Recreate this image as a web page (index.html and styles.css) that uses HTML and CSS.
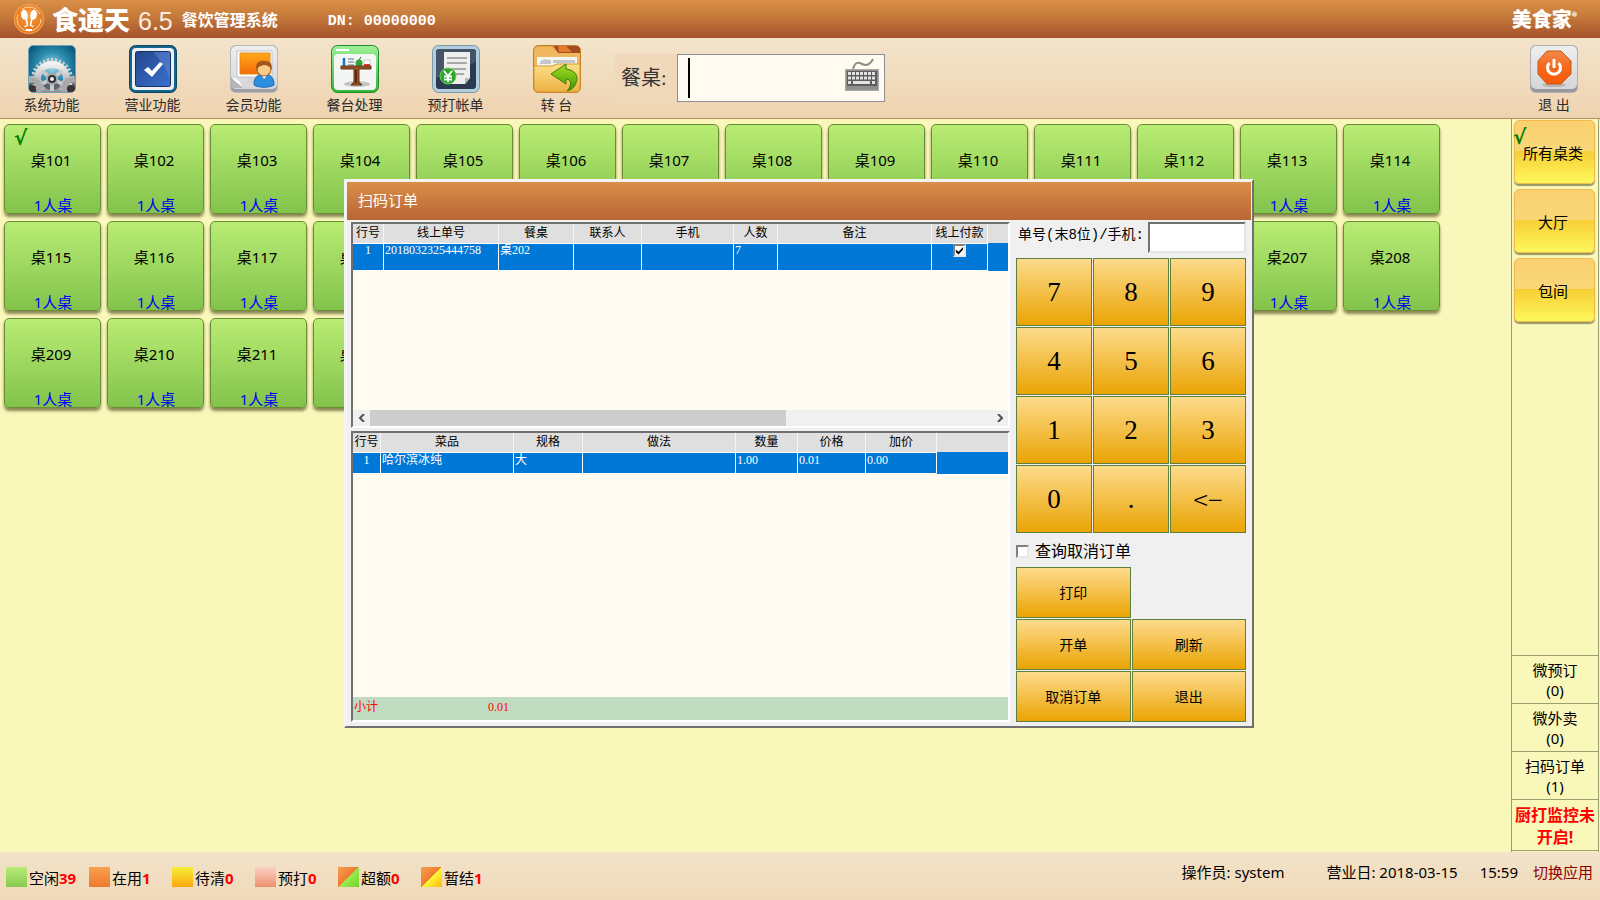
FILE: index.html
```
<!DOCTYPE html>
<html lang="zh-CN">
<head>
    <meta charset="UTF-8">
    <meta name="viewport" content="width=device-width, initial-scale=1.0">
    <title>食通天 6.5 餐饮管理系统</title>
    <link rel="stylesheet" href="styles.css">
</head>
<body>
    <header class="titlebar">
        <svg class="logo" viewBox="0 0 32 32" width="32" height="32" aria-hidden="true">
            <defs>
                <radialGradient id="gLogo" cx="50%" cy="40%" r="60%">
                    <stop offset="0" stop-color="#f9a03c"/><stop offset="1" stop-color="#e0701c"/>
                </radialGradient>
            </defs>
            <circle cx="16" cy="16" r="14.500" fill="url(#gLogo)" stroke="#f0984a" stroke-width="1.500"/>
            <circle cx="16" cy="16" r="12" fill="none" stroke="#fbd9a8" stroke-width="1" stroke-dasharray="42 6 22 6"/>
            <path d="M10 7c2-1 4 1 4.500 4s0 6-1.500 6c-3 0-5-3-5-6 0-2 1-3 2-4zM22 7c-2-1-4 1-4.500 4s0 6 1.500 6c3 0 5-3 5-6 0-2-1-3-2-4z" fill="#fff"/>
            <path d="M13 15l1.500 7-3 2M19 15l-1.500 7 3 2" fill="none" stroke="#fff" stroke-width="1.500"/>
            <path d="M13 27h6" stroke="#fff" stroke-width="2"/>
        </svg>
        <span class="brand">食通天</span>
        <span class="version">6.5</span>
        <span class="product">餐饮管理系统</span>
        <span class="dn">DN: 00000000</span>
        <span class="vendor">美食家<sup>®</sup></span>
    </header>

    <nav class="toolbar">
        <button class="tool" type="button">
            <svg viewBox="0 0 48 48" width="48" height="48" aria-hidden="true">
                <defs>
                    <radialGradient id="gSys" cx="50%" cy="45%" r="60%">
                        <stop offset="0" stop-color="#a8e0f0"/><stop offset=".5" stop-color="#2f8fb0"/><stop offset="1" stop-color="#07587c"/>
                    </radialGradient>
                    <linearGradient id="gGear" x1="0" y1="0" x2="0" y2="1">
                        <stop offset="0" stop-color="#f2f2f2"/><stop offset="1" stop-color="#8b8b8f"/>
                    </linearGradient>
                    <clipPath id="cSys"><rect x="1" y="1" width="46" height="46" rx="4"/></clipPath>
                </defs>
                <rect x=".5" y=".5" width="47" height="47" rx="5" fill="url(#gSys)" stroke="#6fa3b8"/>
                <g clip-path="url(#cSys)">
                    <rect y="36" width="48" height="12" fill="#5a6470"/>
                    <circle cx="24" cy="34" r="19" fill="none" stroke="#d4d4d6" stroke-width="4" stroke-dasharray="2 2"/>
                    <circle cx="24" cy="34" r="14.500" fill="none" stroke="url(#gGear)" stroke-width="7"/>
                    <path d="M24 34L14 26M24 34l10-8M24 34V46M24 34l-13 6M24 34l13 6" stroke="#c9c9cc" stroke-width="4"/>
                    <circle cx="24" cy="34" r="5" fill="#2f2f33" stroke="#aaa" stroke-width="2"/>
                    <circle cx="24" cy="34" r="2" fill="#f4f4f4"/>
                    <circle cx="4" cy="43" r="11" fill="none" stroke="#b8b8bc" stroke-width="3" stroke-dasharray="2 2"/>
                    <circle cx="4" cy="43" r="8" fill="none" stroke="#a8a8ac" stroke-width="5"/>
                    <circle cx="4" cy="44" r="4" fill="#3c3430"/>
                    <circle cx="44" cy="43" r="11" fill="none" stroke="#b8b8bc" stroke-width="3" stroke-dasharray="2 2"/>
                    <circle cx="44" cy="43" r="8" fill="none" stroke="#a8a8ac" stroke-width="5"/>
                    <circle cx="43" cy="44" r="4" fill="#3c3430"/>
                </g>
            </svg>
            <span>系统功能</span>
        </button>
        <button class="tool" type="button">
            <svg viewBox="0 0 48 48" width="48" height="48" aria-hidden="true">
                <defs>
                    <linearGradient id="gBlue" x1="0" y1="0" x2="1" y2="1">
                        <stop offset="0" stop-color="#24468c"/><stop offset="1" stop-color="#3b70d0"/>
                    </linearGradient>
                </defs>
                <rect x=".5" y=".5" width="47" height="47" rx="6" fill="#17648a" stroke="#0b4663"/>
                <rect x="3" y="3" width="42" height="42" rx="4" fill="#eceff3"/>
                <rect x="6.500" y="6.500" width="35" height="35" rx="2" fill="url(#gBlue)" stroke="#172f60"/>
                <path d="M24 7h17v28c-4-12-9-20-17-28z" fill="#7c9fe0" opacity=".35"/>
                <path d="M15 25l4-3 4 4 8-9 3 2-11 13z" fill="#fff"/>
            </svg>
            <span>营业功能</span>
        </button>
        <button class="tool" type="button">
            <svg viewBox="0 0 48 48" width="48" height="48" aria-hidden="true">
                <defs>
                    <linearGradient id="gKey" x1="0" y1="0" x2="0" y2="1">
                        <stop offset="0" stop-color="#eeeef0"/><stop offset="1" stop-color="#d6d6da"/>
                    </linearGradient>
                    <linearGradient id="gOrange" x1="0" y1="0" x2="0" y2="1">
                        <stop offset="0" stop-color="#ffab1c"/><stop offset="1" stop-color="#f46a05"/>
                    </linearGradient>
                </defs>
                <rect x=".5" y=".5" width="47" height="47" rx="5" fill="#9c9ea4" stroke="#b9b9bd"/>
                <rect x="1" y="1" width="46" height="43" rx="5" fill="url(#gKey)"/>
                <path d="M7 6h35v26H7z" fill="#fff" stroke="#c4c4c8"/>
                <path d="M10 8h30v21H10z" fill="url(#gOrange)" stroke="#e88a1a"/>
                <path d="M18 33h10v5H16z" fill="#d0d2d6"/>
                <path d="M1 32l12 11H5c-3 0-4-1-4-4z" fill="#b5b5b9"/>
                <path d="M2 33c5 0 9 4 10 9-2-3-6-4-10-9z" fill="#fff"/>
                <path d="M24 40c0-8 4-11 10-11s10 3 10 11c-5 3-15 3-20 0z" fill="#2d8ee0" stroke="#1b68b8"/>
                <path d="M31 29l3 5 4-5z" fill="#fff"/>
                <circle cx="34" cy="24" r="7" fill="#f9cb8a" stroke="#a55c17"/>
                <path d="M26.500 25c-2-9 5-10 9-9 6 0 7 5 6 9-2-5-8-6-10-4-3 0-3 2-5 4z" fill="#a4561a"/>
            </svg>
            <span>会员功能</span>
        </button>
        <button class="tool" type="button">
            <svg viewBox="0 0 48 48" width="48" height="48" aria-hidden="true">
                <defs>
                    <linearGradient id="gGreen" x1="0" y1="0" x2="0" y2="1">
                        <stop offset="0" stop-color="#9df098"/><stop offset="1" stop-color="#38b53a"/>
                    </linearGradient>
                </defs>
                <rect x=".5" y=".5" width="47" height="47" rx="6" fill="url(#gGreen)" stroke="#1e8c2c"/>
                <path d="M5 5h13" stroke="#fff" stroke-width="2"/>
                <rect x="3" y="9" width="42" height="36" rx="4" fill="#f4f5f5"/>
                <ellipse cx="26" cy="39" rx="13" ry="3" fill="#c4c4c4"/>
                <path d="M13 13v8" stroke="#1376c4" stroke-width="2.500"/>
                <path d="M17 14h6M17 17h6M17 20h6" stroke="#aab4be" stroke-width="2"/>
                <circle cx="28" cy="18" r="3.500" fill="#2fa534"/><path d="M28 15l2-3" stroke="#356e20"/>
                <path d="M33 15h6v6h-6z" fill="#fff" stroke="#ccc"/><path d="M33 19h6v2h-6z" fill="#e8392c"/>
                <path d="M10 21h30v3H28v13l3 3H20l3-3V24H10z" fill="#91502a" stroke="#6c3415"/>
                <path d="M25 25v13" stroke="#5d2a10" stroke-width="2"/>
            </svg>
            <span>餐台处理</span>
        </button>
        <button class="tool" type="button">
            <svg viewBox="0 0 48 48" width="48" height="48" aria-hidden="true">
                <rect x=".5" y=".5" width="47" height="47" rx="6" fill="#b2cddd" stroke="#7c98aa"/>
                <rect x="4" y="4" width="40" height="40" rx="3" fill="#2c3a50"/>
                <path d="M4 7q0-3 3-3h34q3 0 3 3v10L4 33z" fill="#58657a" opacity=".6"/>
                <path d="M12 7h26v26l-5 6H14q-2 0-2-3z" fill="#eeeeec"/>
                <path d="M38 33h-5v6z" fill="#b9b9b5"/>
                <path d="M15 13h20M15 18h20M19 24h15M23 29h9" stroke="#8f9290" stroke-width="1.500"/>
                <circle cx="16" cy="31" r="8" fill="#2ba52f" stroke="#66d052"/>
                <path d="M12 26l4 5 4-5M16 31v6M12 31.500h8M12 34.500h8" fill="none" stroke="#fff" stroke-width="2"/>
            </svg>
            <span>预打帐单</span>
        </button>
        <button class="tool" type="button">
            <svg viewBox="0 0 48 48" width="48" height="48" aria-hidden="true">
                <defs>
                    <linearGradient id="gFolder" x1="0" y1="0" x2="0" y2="1">
                        <stop offset="0" stop-color="#fbe08a"/><stop offset="1" stop-color="#eeb244"/>
                    </linearGradient>
                    <linearGradient id="gArrow" x1="0" y1="0" x2="0" y2="1">
                        <stop offset="0" stop-color="#a5e01c"/><stop offset="1" stop-color="#3f9608"/>
                    </linearGradient>
                </defs>
                <rect x=".5" y=".5" width="47" height="47" rx="5" fill="#e9a848" stroke="#c07c28"/>
                <path d="M20 1h23q4 0 4 4v5H27z" fill="#a34a20"/>
                <path d="M25 1h8l6 6H26z" fill="#e27c2c"/>
                <path d="M1 8q0-6 5-6h13l5 6h23v20H1z" fill="#efb760"/>
                <path d="M4 12h40v12H4z" fill="#f4f4f2"/>
                <path d="M7 17q3-4 8-2h3v4H7zM20 15h22v3H20z" fill="#c3c7ca"/>
                <path d="M1 21h18l5-2h23v23q0 5-5 5H6q-5 0-5-5z" fill="url(#gFolder)" stroke="#d8962e"/>
                <path d="M18 29L33 19v5c9 1 13 7 10 14-2 5-5 7-9 8 5-5 5-12-1-12v5z" fill="url(#gArrow)" stroke="#3b8008"/>
            </svg>
            <span>转 台</span>
        </button>
        <div class="search">
            <label for="tableNo">餐桌:</label>
            <div class="search-box">
                <input type="text" id="tableNo" name="tableNo">
                <svg class="keyboard" viewBox="0 0 34 36" width="34" height="36" aria-hidden="true">
                    <path d="M8 11c2-7 5-7 9-5s8 1 11-5" fill="none" stroke="#8d8d8d" stroke-width="2"/>
                    <rect x=".5" y="11.500" width="33" height="21" fill="#8f8f8f" stroke="#a9a9a9"/>
                    <path d="M2 13h30v15H2z" fill="#5d5d5d"/>
                    <path d="M3 15.500h28M3 20h28M3 24.500h4M27 24.500h4" stroke="#e2e2e2" stroke-width="3" stroke-dasharray="3 1"/>
                    <path d="M8 24.500h17" stroke="#e2e2e2" stroke-width="3"/>
                </svg>
            </div>
        </div>
        <button class="tool exit" type="button">
            <svg viewBox="0 0 48 48" width="48" height="48" aria-hidden="true">
                <defs>
                    <linearGradient id="gPower" x1="0" y1="0" x2="0" y2="1">
                        <stop offset="0" stop-color="#f58a4a"/><stop offset=".5" stop-color="#f4681c"/><stop offset="1" stop-color="#f85a08"/>
                    </linearGradient>
                </defs>
                <rect x=".5" y=".5" width="47" height="47" rx="5" fill="#96989e" stroke="#b0b0b4"/>
                <rect x="1" y="1" width="46" height="43" rx="5" fill="url(#gKey)"/>
                <ellipse cx="24" cy="40" rx="12" ry="2" fill="#b5b5b5"/>
                <path d="M17 6h14l10 10v13L31 39H17L8 29V16z" fill="url(#gPower)" stroke="#c8590f"/>
                <path d="M19.500 18a6.500 6.500 0 1 0 9 0" fill="none" stroke="#fff" stroke-width="3"/>
                <path d="M24 14v9" stroke="#fff" stroke-width="3"/>
            </svg>
            <span>退 出</span>
        </button>
    </nav>

    <main class="main">
        <section class="tables" id="tables"></section>
        <aside class="side">
            <button class="kind active" type="button">所有桌类</button>
            <button class="kind" type="button">大厅</button>
            <button class="kind" type="button">包间</button>
            <div class="notices">
                <a href="#">微预订<br>(0)</a>
                <a href="#">微外卖<br>(0)</a>
                <a href="#">扫码订单<br>(1)</a>
                <a href="#" class="alert">厨打监控未开启!</a>
            </div>
        </aside>
    </main>

    <footer class="statusbar">
        <ul class="legend">
            <li><i class="swatch free"></i>空闲<b>39</b></li>
            <li><i class="swatch busy"></i>在用<b>1</b></li>
            <li><i class="swatch clear"></i>待清<b>0</b></li>
            <li><i class="swatch preprint"></i>预打<b>0</b></li>
            <li><i class="swatch over"></i>超额<b>0</b></li>
            <li><i class="swatch paused"></i>暂结<b>1</b></li>
        </ul>
        <div class="info">
            <span class="operator">操作员: system</span>
            <span class="day">营业日: 2018-03-15</span>
            <span class="clock">15:59</span>
            <a href="#">切换应用</a>
        </div>
    </footer>

    <div class="overlay">
        <div class="dialog" role="dialog" aria-labelledby="dialogTitle">
            <h2 id="dialogTitle">扫码订单</h2>
            <div class="dialog-body">
                <div class="lists">
                    <div class="list orders">
                        <table>
                            <colgroup>
                                <col class="w31"><col class="w115"><col class="w75"><col class="w68"><col class="w92"><col class="w44"><col class="w154"><col class="w56"><col>
                            </colgroup>
                            <thead>
                                <tr><th>行号</th><th>线上单号</th><th>餐桌</th><th>联系人</th><th>手机</th><th>人数</th><th>备注</th><th>线上付款</th><th></th></tr>
                            </thead>
                            <tbody>
                                <tr><td class="num">1</td><td>2018032325444758</td><td>桌202</td><td></td><td></td><td>7</td><td></td><td class="num"><input type="checkbox" aria-label="线上付款" checked></td><td></td></tr>
                            </tbody>
                        </table>
                        <div class="scrollbar">
                            <button type="button" aria-label="向左"><svg viewBox="0 0 8 8" width="8" height="8"><path d="M6 0L2 4l4 4" fill="none" stroke="#505050" stroke-width="2"/></svg></button>
                            <div class="track"><div class="thumb"></div></div>
                            <button type="button" aria-label="向右"><svg viewBox="0 0 8 8" width="8" height="8"><path d="M2 0l4 4-4 4" fill="none" stroke="#505050" stroke-width="2"/></svg></button>
                        </div>
                    </div>
                    <div class="list dishes">
                        <table>
                            <colgroup>
                                <col class="w28"><col class="w133"><col class="w69"><col class="w153"><col class="w62"><col class="w68"><col class="w71"><col>
                            </colgroup>
                            <thead>
                                <tr><th>行号</th><th>菜品</th><th>规格</th><th>做法</th><th>数量</th><th>价格</th><th>加价</th><th></th></tr>
                            </thead>
                            <tbody>
                                <tr><td class="num">1</td><td>哈尔滨冰纯</td><td>大</td><td></td><td>1.00</td><td>0.01</td><td>0.00</td><td></td></tr>
                            </tbody>
                        </table>
                        <div class="subtotal"><span>小计</span><span>0.01</span></div>
                    </div>
                </div>
                <form class="panel">
                    <div class="lookup">
                        <label for="orderNo">单号(末8位)/手机:</label>
                        <input type="text" id="orderNo" name="orderNo">
                    </div>
                    <div class="keypad">
                        <button type="button">7</button><button type="button">8</button><button type="button">9</button>
                        <button type="button">4</button><button type="button">5</button><button type="button">6</button>
                        <button type="button">1</button><button type="button">2</button><button type="button">3</button>
                        <button type="button">0</button><button type="button">.</button><button type="button" class="back">&lt;−</button>
                    </div>
                    <div class="cancelled">
                        <input type="checkbox" id="showCancelled">
                        <label for="showCancelled">查询取消订单</label>
                    </div>
                    <div class="actions">
                        <button type="button" class="print">打印</button>
                        <button type="button">开单</button>
                        <button type="button">刷新</button>
                        <button type="button">取消订单</button>
                        <button type="button">退出</button>
                    </div>
                </form>
            </div>
        </div>
    </div>

    <script src="script.js"></script>
</body>
</html>
```
FILE: styles.css
```
* {
    box-sizing: border-box;
}

body {
    margin: 0;
    min-height: 100vh;
    display: flex;
    flex-direction: column;
    font-family: "Noto Sans", "Noto Sans CJK SC", sans-serif;
    font-size: 15px;
    line-height: 20px;
    color: #000;
    background: #faf7bb;
}

button, input {
    font: inherit;
    color: inherit;
    margin: 0;
    padding: 0;
}

button {
    cursor: pointer;
}

a {
    color: inherit;
    text-decoration: none;
}

/* Title bar */
.titlebar {
    height: 38px;
    padding: 0 23px 0 13px;
    display: flex;
    align-items: center;
    color: #fff;
    background: linear-gradient(#d98f47, #c77c3b 40%, #a6522b);
}

.brand {
    margin-left: 7px;
    font-family: "Noto Sans CJK SC", sans-serif;
    font-size: 26px;
    font-weight: 900;
}

.version {
    margin-left: 8px;
    padding-top: 4px;
    font-family: "Liberation Sans", sans-serif;
    font-size: 25px;
    color: #fbeee0;
}

.product {
    margin-left: 9px;
    padding-top: 2px;
    font-size: 16px;
    font-weight: bold;
}

.dn {
    margin-left: 50px;
    padding-top: 6px;
    font-family: "Liberation Mono", monospace;
    font-size: 15px;
    font-weight: bold;
    white-space: pre;
}

.vendor {
    margin-left: auto;
    font-family: "Noto Sans CJK SC", sans-serif;
    font-size: 20px;
    font-weight: 900;
}

.vendor sup {
    font-size: 10px;
    line-height: 8px;
    vertical-align: 7px;
}

/* Toolbar */
.toolbar {
    height: 81px;
    padding: 7px 0 0 1px;
    display: flex;
    align-items: flex-start;
    border-bottom: 1px solid #c08a62;
    background: linear-gradient(#f3e4cb, #efd3b0);
}

.tool {
    width: 101px;
    display: flex;
    flex-direction: column;
    align-items: center;
    gap: 2px;
    border: none;
    background: none;
    font-size: 14px;
    color: #2b2b2b;
}

.exit {
    width: 92px;
    margin-left: auto;
}

.search {
    margin: 9px 0 0 8px;
    display: flex;
    align-items: center;
    font-size: 20px;
    background: #efd9ba;
}

.search label {
    width: 62px;
    padding-left: 6px;
    font-family: "Liberation Serif", "Noto Sans CJK SC", serif;
    color: #333;
}

.search-box {
    width: 208px;
    height: 48px;
    display: flex;
    align-items: flex-start;
    padding: 3px 5px 3px 10px;
    border: 1px solid #8f8f93;
    background: #fffbf0;
}

.search-box input {
    flex: 1;
    min-width: 0;
    height: 40px;
    border: none;
    outline: none;
    border-left: 2px solid #000;
    background: none;
}

/* Tables */
.main {
    flex: 1;
    display: flex;
}

.tables {
    flex: 1;
    padding: 5px 4px;
    display: grid;
    grid-template-columns: repeat(auto-fill, 97px);
    grid-auto-rows: 90px;
    align-content: start;
    gap: 7px 6px;
}

.table-card {
    position: relative;
    display: flex;
    flex-direction: column;
    align-items: center;
    padding: 25px 3px 0 0;
    border: 1px solid #6b8c35;
    border-radius: 5px;
    background: linear-gradient(#b9ec74, #82c34c);
    box-shadow: 0 3px 3px rgba(90, 90, 40, 0.7);
}

.table-card .seats {
    margin-top: auto;
    margin-left: 4px;
    line-height: 16px;
    color: #0000f5;
}

.table-card.active::before,
.kind.active::before {
    content: "√";
    position: absolute;
    left: 9px;
    top: 3px;
    font-family: "DejaVu Sans", sans-serif;
    font-size: 20px;
    font-weight: bold;
    color: #008000;
}

.side {
    width: 88px;
    margin-right: 1px;
    display: flex;
    flex-direction: column;
    gap: 5px;
    padding-top: 1px;
    border-left: 1px solid #98a070;
    border-right: 1px solid #98a070;
}

.kind {
    position: relative;
    height: 64px;
    margin: 0 3px 0 2px;
    padding: 2px 3px 0 0;
    border: 1px solid #f0bb4c;
    border-radius: 5px;
    background: linear-gradient(#fad071, #f9d777 48%, #f7cf35 49%, #fdf75c);
    box-shadow: 0 2px 1px rgba(110, 110, 60, 0.7);
}

.kind.active::before {
    left: -2px;
    top: 6px;
}

.notices {
    margin-top: auto;
    margin-bottom: 1px;
    border-bottom: 1px solid #98a070;
}

.notices a {
    display: block;
    padding: 4px 0 3px;
    border-top: 1px solid #98a070;
    text-align: center;
}

.notices .alert {
    padding: 4px 2px 2px;
    font-size: 16px;
    line-height: 22px;
    font-weight: bold;
    color: #f00;
}

/* Status bar */
.statusbar {
    height: 48px;
    padding: 0 7px 0 6px;
    display: flex;
    justify-content: space-between;
    background: linear-gradient(#f3e3ca, #efd9b8);
}

.legend {
    display: flex;
    margin: 0;
    padding: 15px 0 0;
    list-style: none;
}

.legend li {
    width: 83px;
    display: flex;
    line-height: 23px;
}

.legend b {
    color: #f00;
}

.swatch {
    width: 21px;
    height: 20px;
    margin-right: 2px;
}

.free {
    background: linear-gradient(#b9ec74, #88c850);
}

.busy {
    background: linear-gradient(#f9a050, #ee7a30);
}

.clear {
    background: linear-gradient(#f6ee3c, #fca80c);
}

.preprint {
    background: linear-gradient(#fbd0c4, #ee9070);
}

.over {
    background: linear-gradient(135deg, #f9a050, #ee7a30 50%, #9cec50 50%, #70d424);
}

.paused {
    background: linear-gradient(135deg, #f9a050, #ee7a30 50%, #fff838 50%, #fcb80c);
}

.info {
    display: flex;
    padding-top: 10px;
}

.info .day {
    margin-left: 42px;
}

.info .clock {
    margin-left: 22px;
}

.info a {
    margin-left: 15px;
    color: #8b0000;
}

/* Dialog */
.overlay {
    position: absolute;
    inset: 0;
    padding: 7px 2px 0 0;
    display: flex;
    align-items: center;
    justify-content: center;
    pointer-events: none;
}

.dialog {
    width: 910px;
    padding: 1px 1px 4px 1px;
    border: 2px solid;
    border-color: #f4f4f4 #707070 #707070 #f4f4f4;
    background: #f0f0f0;
    pointer-events: auto;
}

.dialog h2 {
    margin: 0;
    padding: 8px 11px 10px;
    font-size: 15px;
    font-weight: normal;
    color: #fff;
    background: linear-gradient(#d98f47, #b96635);
}

.dialog-body {
    display: flex;
    gap: 6px;
    padding: 2px 5px 0 4px;
}

.lists {
    flex: 1;
    display: flex;
    flex-direction: column;
    gap: 3px;
}

.list {
    display: flex;
    flex-direction: column;
    border: 2px solid;
    border-color: #707070 #fff #fff #707070;
    background: #fffbf0;
}

.orders {
    height: 206px;
}

.dishes {
    flex: 1;
}

.list table {
    width: 100%;
    table-layout: fixed;
    border-collapse: separate;
    border-spacing: 0;
    font-family: "Liberation Serif", "Noto Sans CJK SC", serif;
    font-size: 12px;
    line-height: 13px;
}

.list th {
    height: 19px;
    padding: 0;
    border-right: 1px solid #f6f6f6;
    font-weight: normal;
    white-space: nowrap;
    background: #dfdfdf;
}

.list td {
    height: 22px;
    padding: 0 1px;
    border-top: 1px solid #fff;
    border-right: 1px solid #fff;
    border-bottom: 1px solid #fff;
    vertical-align: top;
    white-space: nowrap;
    color: #fff;
    background: #0078d7;
}

.orders td {
    height: 28px;
}

.dishes td {
    padding-top: 1px;
}

.list th:last-child,
.list td:last-child {
    border-right: none;
}

.list td:last-child {
    border-color: #0078d7;
}

.list .num {
    text-align: center;
}

.w28 { width: 28px; }
.w31 { width: 31px; }
.w44 { width: 44px; }
.w56 { width: 56px; }
.w62 { width: 62px; }
.w68 { width: 68px; }
.w69 { width: 69px; }
.w71 { width: 71px; }
.w75 { width: 75px; }
.w92 { width: 92px; }
.w115 { width: 115px; }
.w133 { width: 133px; }
.w153 { width: 153px; }
.w154 { width: 154px; }

input[type="checkbox"] {
    appearance: none;
    width: 13px;
    height: 13px;
    display: inline-block;
    vertical-align: top;
    border: 2px solid;
    border-color: #808080 #e8e8e8 #e8e8e8 #808080;
    background: #fff;
}

input[type="checkbox"]:checked::before {
    content: "";
    display: block;
    width: 9px;
    height: 9px;
    background: #000;
    clip-path: polygon(10% 40%, 40% 65%, 90% 10%, 90% 40%, 40% 95%, 10% 70%);
}

.scrollbar {
    display: flex;
    height: 16px;
    margin-top: auto;
    background: #f0f0f0;
}

.scrollbar button {
    width: 17px;
    display: flex;
    align-items: center;
    justify-content: center;
    border: none;
    background: none;
}

.track {
    flex: 1;
}

.thumb {
    width: 67%;
    height: 100%;
    background: #cdcdcd;
}

.subtotal {
    height: 23px;
    margin-top: auto;
    padding: 0 1px;
    display: flex;
    gap: 110px;
    font-family: "Liberation Serif", "Noto Sans CJK SC", serif;
    font-size: 12px;
    color: #f00;
    background: #c0dcc0;
}

.panel {
    width: 230px;
}

.lookup {
    display: flex;
    align-items: center;
}

.lookup label {
    flex: 1;
    padding-left: 2px;
    align-self: flex-start;
    font-family: "Liberation Mono", "Noto Sans CJK SC", monospace;
    font-size: 14px;
    line-height: 26px;
    white-space: nowrap;
}

.lookup input {
    width: 98px;
    height: 31px;
    border: 2px solid;
    border-color: #707070 #e4e4e4 #e4e4e4 #707070;
    background: #fff;
}

.keypad {
    display: grid;
    grid-template-columns: repeat(3, 1fr);
    grid-auto-rows: 68px;
    gap: 1px;
    margin-top: 5px;
}

.keypad button,
.actions button {
    border: 1px solid #5f7f3c;
    background: linear-gradient(#fddb8c, #eaa404);
}

.keypad button {
    font-family: "Liberation Serif", serif;
    font-size: 27px;
}

.keypad .back {
    font-family: "Noto Sans CJK SC", sans-serif;
    font-weight: 300;
}

.cancelled {
    display: flex;
    align-items: center;
    gap: 6px;
    padding: 8px 0 6px;
    font-size: 16px;
}

.actions {
    display: grid;
    grid-template-columns: 1fr 1fr;
    grid-auto-rows: 51px;
    gap: 1px;
    font-size: 14px;
}

.print,
.print + button {
    grid-column: 1;
}
```
FILE: script.js
```
document.addEventListener('DOMContentLoaded', () => {
    const container = document.getElementById('tables');

    // 101-120 and 201-220
    [100, 200].forEach((floor) => {
        for (let i = 1; i <= 20; i++) {
            const card = document.createElement('button');
            card.type = 'button';
            card.className = 'table-card';
            card.innerHTML = `<span>桌${floor + i}</span><span class="seats">1人桌</span>`;
            container.appendChild(card);
        }
    });

    container.firstElementChild.classList.add('active');
});
```
